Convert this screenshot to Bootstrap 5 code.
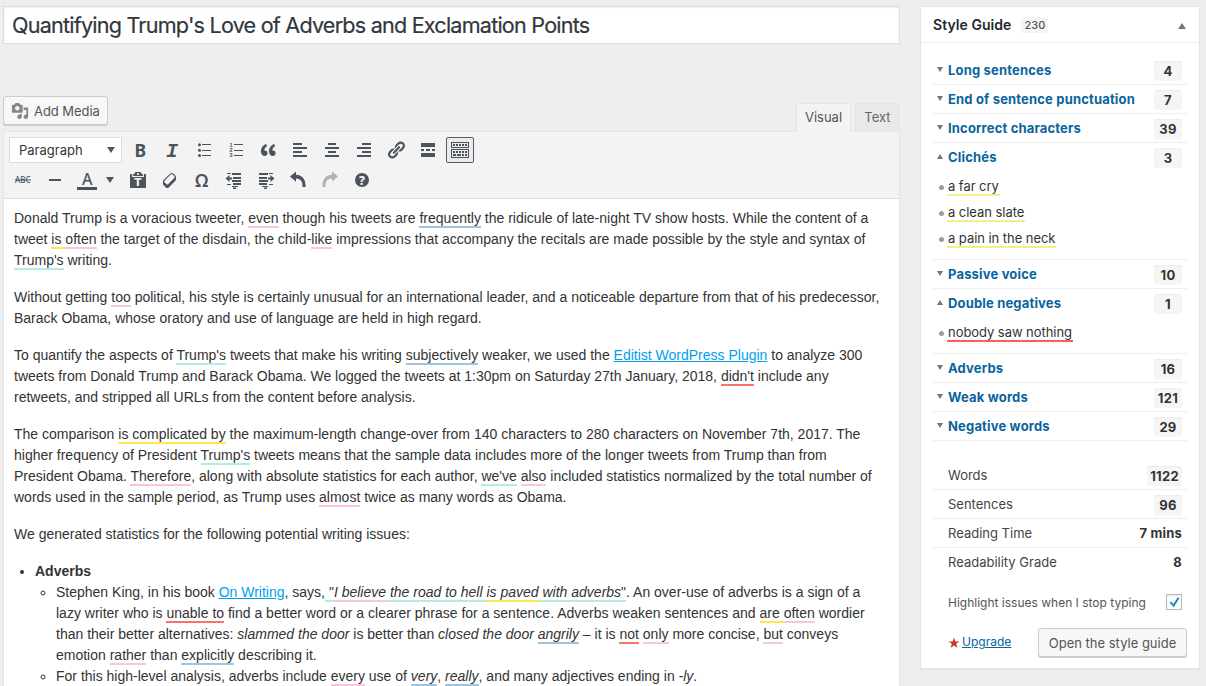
<!DOCTYPE html>
<html lang="en">
<head>
<meta charset="utf-8">
<title>Edit Post</title>
<link rel="stylesheet" href="https://cdn.jsdelivr.net/npm/bootstrap@5.3.0/dist/css/bootstrap.min.css">
<style>
body{background:#eee;font-family:Inter,"Liberation Sans",sans-serif;font-size:13px;line-height:1.4;color:#444;height:686px;overflow:hidden}
.page{padding:6px 6px 0 3px;height:686px}
.main-col{width:897px;height:680px}
.title-field{height:38px;border:1px solid #ddd;background:#fff;color:#32373c;font-size:21.6px;line-height:36px;padding:0 8px;box-shadow:inset 0 1px 2px rgba(0,0,0,.07);border-radius:0;letter-spacing:-.79px;-webkit-text-stroke:.2px #32373c}
.wp-btn{background:#f7f7f7;border:1px solid #ccc;border-radius:3px;box-shadow:0 1px 0 #ccc;color:#555;font-size:13px;line-height:26px;padding:0 7px;white-space:nowrap}
.tools{height:35px;margin-top:52px}
.media-btn{height:29px;width:105px}
.media-btn svg{margin-right:5px}
.media-btn span{letter-spacing:-.05px}
.tab-btn{height:28px;margin-top:7px;border:1px solid #e5e5e5;border-bottom:0;background:#e9e9e9;color:#666;font-size:13px;line-height:26px;text-align:center}
.tab-btn.current{background:#f3f3f3;color:#555;height:29px;position:relative;z-index:1}
.tab-visual{width:55px}
.tab-text{width:45px;margin-left:4px}
.editor{border:1px solid #e5e5e5;border-bottom:0;background:#fff;flex:1 1 0;min-height:0;overflow:hidden}
.toolbar-area{background:#f3f3f3;border-bottom:1px solid #ddd;height:67px;padding:3px 3px}
.t-row{height:30px}
.format-select{width:113px;height:26px;background:#fff;border:1px solid #ddd;margin:2px 2px 2px 2px;padding:0 6px 0 9px;color:#32373c}
.t-btn{width:28px;height:26px;margin:2px;border:1px solid transparent;border-radius:2px;display:flex;align-items:center;justify-content:center;flex:none}
.t-btn.on{border-color:#555d66;background:#ebebeb}
.t-btn.faded{opacity:.4}
.t-btn svg{width:20px;height:20px;fill:#4b545c;flex:none;overflow:visible}
.more-caret{width:13px;margin-right:6px}
.caret{width:0;height:0;border:4px solid transparent;border-top:6px solid #50575e;border-bottom:0}
.prose{font-family:"Liberation Sans",sans-serif;font-size:14px;line-height:21px;color:#333;padding:9px 10px;white-space:nowrap}
.prose p{margin:0 0 16px}
.prose ul{margin:0;padding-left:21px}
.prose a{color:#00a0f0;text-decoration:underline}
.hl{border-bottom:2px solid #f9c6e0;padding-bottom:0}
.hb{border-color:#9bc6de}.hy{border-color:#fde74c}.ht{border-color:#b2ece4}.hr-red{border-color:#fa7268}
.guide{width:280px;height:663px;border:1px solid #e5e5e5;border-radius:0;box-shadow:0 1px 1px rgba(0,0,0,.04);margin-left:20px;background:#fff;color:#444}
.guide-head{height:36px;border-bottom:1px solid #eee;padding:0 13px 0 12px;color:#23282d;font-size:14px;font-weight:600;letter-spacing:.05px}
.total{font-size:11px;font-weight:500;color:#555;background:#f5f5f5;border-radius:3px;padding:0 3px;height:16px;line-height:16px;margin-left:10px}
.up{width:0;height:0;border:4px solid transparent;border-bottom:6px solid #72777c;border-top:0;position:relative;top:1px}
.g-body{padding:13px 12px 0}
.g-row{height:29px;border-bottom:1px solid #eee;padding:0 5px 0 15px;position:relative}
.g-row.open,.g-row.last{border-bottom-color:transparent}
.g-row>:first-child{padding-top:1px}
.g-row a{color:#0a649d;font-weight:700;text-decoration:none;letter-spacing:.17px}
.g-row a::before{content:"";position:absolute;left:4px;top:11px;border:3px solid transparent;border-top:5px solid #72777c;border-bottom:0}
.g-row.open a::before{border-top:0;border-bottom:5px solid #72777c}
.cnt{min-width:28px;height:20px;background:#f5f5f5;border-radius:3px;box-shadow:inset 0 1px 0 #ececec;font-weight:700;text-align:center;line-height:21px;padding:0 3px;margin-top:2px;letter-spacing:.3px;color:#333}
.val{font-weight:700;color:#333;letter-spacing:.2px}
.g-list{list-style:none;margin:0;padding:2px 0 7px 14px;border-bottom:1px solid #eee}
.g-list li{height:26px;line-height:25px;position:relative;color:#333;letter-spacing:-.05px}
.g-list li::before{content:"";position:absolute;left:-8px;top:11px;width:5px;height:5px;border-radius:50%;background:#9a9ea3}
.g-list span{border-bottom:2px solid #f3ef88;padding:0 1px}
.g-list .red{border-color:#ff5c5c}
.stats{margin-top:20px}
.check{width:16px;height:16px;border:1px solid #b4b9be;background:#fff;box-shadow:inset 0 1px 2px rgba(0,0,0,.1)}
.hint{height:16px;margin:17px 5px 0 15px;font-size:12px;color:#555}
.hint-label{padding-top:3px}
.foot{margin:18px 0 0 15px}
.foot a{color:#0a649d;font-size:12px;margin-left:2px}
.open-btn{height:29px;width:149px;text-align:center}
</style>
</head>
<body>
<div class="page d-flex align-items-start">
<main class="main-col d-flex flex-column">
<div class="title-field"><span class="t-title">Quantifying Trump's Love of Adverbs and Exclamation Points</span></div>
<div class="tools d-flex align-items-start">
<button class="wp-btn media-btn d-flex align-items-center" type="button"><svg width="18" height="18" viewBox="0 0 20 20" fill="#82878c"><path d="M13 11V4c0-.55-.45-1-1-1h-1.67L9 1H5L3.67 3H2c-.55 0-1 .45-1 1v7c0 .55.45 1 1 1h10c.55 0 1-.45 1-1zM7 4.5c1.38 0 2.5 1.12 2.5 2.5S8.38 9.5 7 9.5 4.5 8.38 4.5 7 5.62 4.5 7 4.5zM14 6h5v10.500c0 1.38-1.12 2.500-2.500 2.500S14 17.880 14 16.500s1.120-2.500 2.500-2.500c.17 0 .34.02.5.05V9h-3V6zm-4 8.050V13h2v3.500c0 1.380-1.120 2.500-2.500 2.500S7 17.880 7 16.500 8.120 14 9.500 14c.17 0 .34.02.5.05z"/></svg><span>Add Media</span></button>
<div class="tab-btn tab-visual current ms-auto">Visual</div>
<div class="tab-btn tab-text">Text</div>
</div>
<section class="editor">
<div class="toolbar-area">
<div class="t-row d-flex">
<div class="format-select d-flex align-items-center justify-content-between"><span>Paragraph</span><i class="caret"></i></div>
<div class="t-btn"><svg viewBox="0 0 20 20"><text x="4.500" y="17" font-family="Noto Sans" font-weight="700" font-size="17.500">B</text></svg></div>
<div class="t-btn"><svg viewBox="0 0 20 20"><text x="4" y="17" font-family="Liberation Mono" font-weight="700" font-style="italic" font-size="20">I</text></svg></div>
<div class="t-btn"><svg viewBox="0 0 20 20"><path d="M8 4h9v1H8zM8 10h9v1H8zM8 15h9v1H8z"/><circle cx="5.500" cy="4.800" r="1.500"/><circle cx="5.500" cy="10.300" r="1.500"/><circle cx="5.500" cy="15.500" r="1.500"/></svg></div>
<div class="t-btn"><svg viewBox="0 0 20 20"><path d="M8 4h9v1H8zM8 10h9v1H8zM8 15h9v1H8z"/><g font-family="Liberation Sans" font-weight="700" font-size="5.500"><text x="3.500" y="7">1</text><text x="3.500" y="12">2</text><text x="3.500" y="17">3</text></g></svg></div>
<div class="t-btn"><svg viewBox="0 0 20 20"><path d="M9.490 13.220c0-.74-.2-1.380-.61-1.900-.62-.78-1.830-.88-2.530-.72-.29-1.650 1.110-3.750 2.920-4.650L7.880 4c-2.730 1.300-5.420 4.280-4.960 8.050C3.210 14.430 4.590 16 6.540 16c.85 0 1.560-.25 2.120-.75s.83-1.180.83-2.030zm8.050 0c0-.74-.2-1.380-.61-1.900-.63-.78-1.830-.88-2.530-.72-.29-1.650 1.110-3.750 2.920-4.650L15.930 4c-2.730 1.300-5.410 4.280-4.950 8.050.29 2.380 1.660 3.950 3.610 3.950.85 0 1.560-.25 2.120-.75s.83-1.180.83-2.030z"/></svg></div>
<div class="t-btn"><svg viewBox="0 0 20 20"><path d="M3 3h9v2H3zM3 7h14v2H3zM3 11h9v2H3zM3 15h14v2H3z"/></svg></div>
<div class="t-btn"><svg viewBox="0 0 20 20"><path d="M6 3h8v2H6zM3 7h14v2H3zM6 11h8v2H6zM3 15h14v2H3z"/></svg></div>
<div class="t-btn"><svg viewBox="0 0 20 20"><path d="M8 3h9v2H8zM3 7h14v2H3zM8 11h9v2H8zM3 15h14v2H3z"/></svg></div>
<div class="t-btn"><svg viewBox="0 0 20 20"><path d="M17.740 2.760c1.680 1.690 1.680 4.410 0 6.100l-1.530 1.520c-1.120 1.120-2.700 1.470-4.140 1.090l2.620-2.610.76-.77.76-.76c.84-.84.84-2.200 0-3.040-.84-.85-2.200-.85-3.040 0l-.77.76-3.380 3.380c-.37-1.440-.02-3.020 1.100-4.140l1.520-1.530c1.690-1.680 4.420-1.680 6.100 0zM8.590 13.430l5.340-5.340c.42-.42.42-1.100 0-1.520-.44-.43-1.130-.39-1.530 0l-5.330 5.340c-.42.42-.42 1.100 0 1.520.44.43 1.130.39 1.520 0zm-.76 2.290l4.140-4.150c.38 1.440.03 3.020-1.090 4.140l-1.520 1.530c-1.690 1.680-4.410 1.680-6.100 0-1.680-1.680-1.680-4.420 0-6.100l1.530-1.520c1.120-1.120 2.700-1.470 4.140-1.100l-4.140 4.150c-.85.84-.85 2.200 0 3.050.84.84 2.200.84 3.040 0z"/></svg></div>
<div class="t-btn"><svg viewBox="0 0 20 20"><path d="M3 3h14v4H3zM3 9h3v2H3zM8 9h4v2H8zM14 9h3v2h-3zM3 13h14v4H3z"/></svg></div>
<div class="t-btn on"><svg viewBox="0 0 20 20"><path d="M19 2v6H1V2h18zm-1 5V3H2v4h16zM5 4v2H3V4h2zm3 0v2H6V4h2zm3 0v2H9V4h2zm3 0v2h-2V4h2zm3 0v2h-2V4h2zm2 5v9H1V9h18zm-1 8v-7H2v7h16zM5 11v2H3v-2h2zm3 0v2H6v-2h2zm3 0v2H9v-2h2zm3 0v2h-2v-2h2zm3 0v2h-2v-2h2zM6 14v2H3v-2h3zm5 0v2H7v-2h4zm3 0v2h-2v-2h2zm3 0v2h-2v-2h2z"/></svg></div>
</div>
<div class="t-row d-flex">
<div class="t-btn"><svg viewBox="0 0 20 20"><text x="2" y="13" font-family="Noto Sans" font-weight="500" font-size="8" textLength="15.500" lengthAdjust="spacingAndGlyphs">ABC</text><path d="M2 9.500h16v1H2z"/></svg></div>
<div class="t-btn"><svg viewBox="0 0 20 20"><path d="M4 9h12v2H4z"/></svg></div>
<div class="t-btn"><svg viewBox="0 0 20 20"><text x="5" y="14.500" font-family="Noto Sans" font-weight="500" font-size="16">A</text><path d="M0 17h20v3H0z"/></svg></div>
<div class="more-caret d-flex align-items-center justify-content-center"><i class="caret"></i></div>
<div class="t-btn"><svg viewBox="0 0 20 20"><path d="M12.380 2L15 5v1H5V5l2.640-3h4.740zM10 5c.55 0 1-.44 1-1 0-.55-.45-1-1-1s-1 .45-1 1c0 .56.45 1 1 1zm5.450-1H17c.55 0 1 .45 1 1v12c0 .56-.45 1-1 1H3c-.55 0-1-.44-1-1V5c0-.55.45-1 1-1h1.550L4 4.630V7h12V4.630z"/><text x="6.200" y="16" font-family="DejaVu Sans" font-weight="700" font-size="10.500" fill="#f5f5f5">T</text></svg></div>
<div class="t-btn"><svg viewBox="0 0 20 20"><path d="M14.290 4.590l1.100 1.110c.41.4.61.94.61 1.470v2.120c0 .53-.2 1.070-.61 1.470l-6.630 6.630c-.4.41-.94.61-1.470.61s-1.070-.2-1.470-.61l-1.110-1.100-1.100-1.110c-.41-.4-.61-.94-.61-1.470v-2.120c0-.54.2-1.070.61-1.480l6.630-6.620c.4-.41.94-.61 1.470-.61s1.060.2 1.470.61zm-6.210 9.700l6.420-6.420c.39-.39.39-1.030 0-1.430L12.360 4.300c-.19-.19-.45-.29-.72-.29s-.52.1-.71.29l-6.420 6.420c-.39.4-.39 1.040 0 1.430l2.140 2.140c.38.38 1.040.38 1.430 0z"/></svg></div>
<div class="t-btn"><svg viewBox="0 0 20 20"><text x="2.900" y="17" font-family="Noto Sans" font-weight="600" font-size="18">Ω</text></svg></div>
<div class="t-btn"><svg viewBox="0 0 20 20"><path d="M3 3h4v1H3zM8 3h9v2H8zM9 7h8v2H9zM8 10h9v2H8zM9 13h8v2H9zM3 14h4v1H3zM8 16h6v1H8zM9 17.500h3V19H9zM5.500 5v2.500H8v2H5.500V12L1.500 8.500z"/></svg></div>
<div class="t-btn"><svg viewBox="0 0 20 20"><path d="M13 3h4v1h-4zM3 3h9v2H3zM3 7h8v2H3zM3 10h9v2H3zM3 13h8v2H3zM13 14h4v1h-4zM6 16h6v1H6zM8 17.500h3V19H8zM14.500 5v2.500H12v2h2.500V12l4-3.500z"/></svg></div>
<div class="t-btn"><svg viewBox="0 0 20 20"><path d="M8 1.500v3.200c6.500.3 10 4.800 9.500 12.300h-3c.3-5.300-1.500-8.200-6.500-8.500v3.200L2 6.500z"/></svg></div>
<div class="t-btn faded"><svg viewBox="0 0 20 20"><path d="M12 1.500v3.200C5.500 5 2 9.500 2.500 17h3c-.3-5.300 1.500-8.200 6.500-8.500v3.200l6-5.200z"/></svg></div>
<div class="t-btn"><svg viewBox="0 0 20 20"><circle cx="10" cy="10" r="7"/><text x="7" y="14.500" font-family="Noto Sans" font-weight="800" font-size="12" fill="#f5f5f5">?</text></svg></div>
</div>
</div>
<article class="prose">
<p>Donald Trump is a voracious tweeter, <span class="hl">even</span> though his tweets are <span class="hl hb">frequently</span> the ridicule of late-night TV show hosts. While the content of a<br>tweet <span class="hl hy">is </span><span class="hl">often</span> the target of the disdain, the child-<span class="hl">like</span> impressions that accompany the recitals are made possible by the style and syntax of<br><span class="hl ht">Trump's</span> writing.</p>
<p>Without getting <span class="hl">too</span> political, his style is certainly unusual for an international leader, and a noticeable departure from that of his predecessor,<br>Barack Obama, whose oratory and use of language are held in high regard.</p>
<p>To quantify the aspects of <span class="hl ht">Trump's</span> tweets that make his writing <span class="hl hb">subjectively</span> weaker, we used the <a href="#">Editist WordPress Plugin</a> to analyze 300<br>tweets from Donald Trump and Barack Obama. We logged the tweets at 1:30pm on Saturday 27th January, 2018, <span class="hl hr-red">didn't</span> include any<br>retweets, and stripped all URLs from the content before analysis.</p>
<p>The comparison <span class="hl hy">is complicated by</span> the maximum-length change-over from 140 characters to 280 characters on November 7th, 2017. The<br>higher frequency of President <span class="hl ht">Trump's</span> tweets means that the sample data includes more of the longer tweets from Trump than from<br>President Obama. <span class="hl">Therefore</span>, along with absolute statistics for each author, <span class="hl ht">we've</span> <span class="hl">also</span> included statistics normalized by the total number of<br>words used in the sample period, as Trump uses <span class="hl">almost</span> twice as many words as Obama.</p>
<p>We generated statistics for the following potential writing issues:</p>
<ul><li><b>Adverbs</b>
<ul><li>Stephen King, in his book <a href="#">On Writing</a>, says,<span class="hl ht"> "</span><em><span class="hl">I believe</span><span class="hl ht"> the road to hell </span><span class="hl hy">is paved</span><span class="hl ht"> with adverbs</span></em><span class="hl ht">"</span>. An over-use of adverbs is a sign of a<br>lazy writer who is <span class="hl hr-red">unable to</span> find a better word or a clearer phrase for a sentence. Adverbs weaken sentences and <span class="hl hy">are </span><span class="hl">often</span> wordier<br>than their better alternatives: <em>slammed the door</em> is better than <em>closed the door <span class="hl hb">angrily</span></em> – it is <span class="hl hr-red">not</span> <span class="hl">only</span> more concise, <span class="hl">but</span> conveys<br>emotion <span class="hl">rather</span> than <span class="hl hb">explicitly</span> describing it.</li>
<li>For this high-level analysis, adverbs include <span class="hl">every</span> use of <em><span class="hl hb">very</span></em>, <em><span class="hl hb">really</span></em>, and many adjectives ending in <em>-ly</em>.</li></ul></li></ul>
</article>
</section>
</main>
<aside class="guide card">
<div class="guide-head d-flex align-items-center"><span>Style Guide</span><span class="total">230</span><i class="up ms-auto"></i></div>
<div class="g-body">
<div class="g-row d-flex align-items-center justify-content-between"><a href="#">Long sentences</a><span class="cnt">4</span></div>
<div class="g-row d-flex align-items-center justify-content-between"><a href="#">End of sentence punctuation</a><span class="cnt">7</span></div>
<div class="g-row d-flex align-items-center justify-content-between"><a href="#">Incorrect characters</a><span class="cnt">39</span></div>
<div class="g-row open d-flex align-items-center justify-content-between"><a href="#">Clichés</a><span class="cnt">3</span></div>
<ul class="g-list"><li><span>a far cry</span></li><li><span>a clean slate</span></li><li><span>a pain in the neck</span></li></ul>
<div class="g-row d-flex align-items-center justify-content-between"><a href="#">Passive voice</a><span class="cnt">10</span></div>
<div class="g-row open d-flex align-items-center justify-content-between"><a href="#">Double negatives</a><span class="cnt">1</span></div>
<ul class="g-list"><li><span class="red">nobody saw nothing</span></li></ul>
<div class="g-row d-flex align-items-center justify-content-between"><a href="#">Adverbs</a><span class="cnt">16</span></div>
<div class="g-row d-flex align-items-center justify-content-between"><a href="#">Weak words</a><span class="cnt">121</span></div>
<div class="g-row d-flex align-items-center justify-content-between"><a href="#">Negative words</a><span class="cnt">29</span></div>
<div class="stats">
<div class="g-row d-flex align-items-center justify-content-between"><span>Words</span><span class="cnt">1122</span></div>
<div class="g-row d-flex align-items-center justify-content-between"><span>Sentences</span><span class="cnt">96</span></div>
<div class="g-row d-flex align-items-center justify-content-between"><span>Reading Time</span><span class="val">7 mins</span></div>
<div class="g-row last d-flex align-items-center justify-content-between"><span>Readability Grade</span><span class="val">8</span></div>
</div>
<div class="hint d-flex align-items-center justify-content-between"><span class="hint-label">Highlight issues when I stop typing</span><span class="check d-flex"><svg width="14" height="14" viewBox="0 0 14 14"><path d="M2.500 7.500l1.800-1 2 2.500L10.800 2.200l1.700 1L6.700 12.300z" fill="#1e8cbe"/></svg></span></div>
<div class="foot d-flex align-items-center"><svg width="12" height="12" viewBox="0 0 20 20" fill="#c83c21"><path d="M10 1l2.300 6.300H19l-5.300 4 2 6.700L10 14l-5.700 4 2-6.700-5.300-4h6.700z"/></svg><a href="#">Upgrade</a><button type="button" class="wp-btn open-btn ms-auto">Open the style guide</button></div>
</div>
</aside>
</div>
<script src="https://cdn.jsdelivr.net/npm/bootstrap@5.3.0/dist/js/bootstrap.bundle.min.js"></script>
</body>
</html>
